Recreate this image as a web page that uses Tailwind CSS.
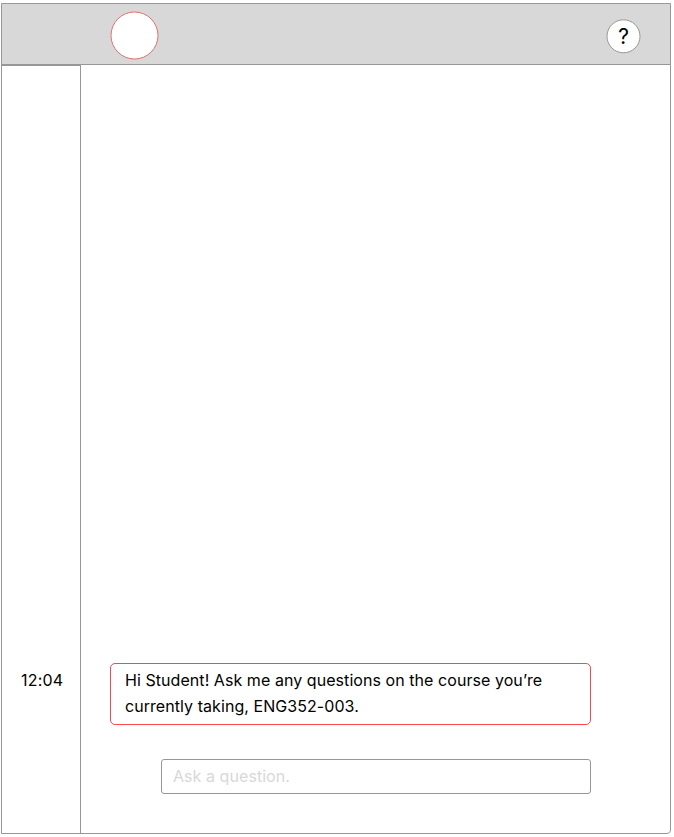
<!DOCTYPE html>
<html lang="en">
<head>
<meta charset="utf-8">
<title>Course assistant</title>
<script src="https://cdn.jsdelivr.net/npm/@tailwindcss/browser@4"></script>
</head>
<body class="bg-white pt-[3px] pl-px overflow-hidden font-['Inter','Liberation_Sans',sans-serif] text-black">
<div class="flex flex-col w-[670px] h-[831px] border border-[#979797] rounded-br-[4px]">
  <header class="flex shrink-0 items-start justify-between h-[61px] bg-[#d8d8d8] border-b border-[#979797] pl-[108px] pr-[29px]">
    <svg class="mt-[7px] size-[49px]" viewBox="0 0 49 49"><circle cx="24.5" cy="24.5" r="23.5" fill="#fff" stroke="#e36f72"/></svg>
    <button class="mt-[15px] size-[35px] grid place-items-center" aria-label="Help">
      <svg class="col-start-1 row-start-1 size-[35px]" viewBox="0 0 35 35"><circle cx="17.5" cy="17.3" r="16.5" fill="#fff" stroke="#979797"/></svg>
      <span class="col-start-1 row-start-1 pb-px text-[21px] leading-[33px] font-normal">?</span>
    </button>
  </header>
  <main class="flex grow">
    <aside class="flex flex-col justify-end w-[79px] border-t border-r border-[#979797] pb-[140px] pl-[19px] text-[16px] leading-[26px] tracking-[0.2px]"><time>12:04</time></aside>
    <section class="flex grow flex-col items-end justify-end pr-[79px] pb-[39px]">
      <p class="w-[481px] h-[62px] rounded-[5px] border border-[#f9484e] pl-[14px] pt-[3px] text-[16px] leading-[26px] tracking-[0.06px]">Hi Student! Ask me any questions on the course you’re<br>currently taking, ENG352-003.</p>
      <input class="mt-[34px] w-[430px] h-[35px] rounded-[3px] border border-[#979797] px-[11px] pb-[2px] text-[16px] tracking-[0.06px] placeholder:text-[#d8d8d8]" placeholder="Ask a question.">
    </section>
  </main>
</div>
</body>
</html>
